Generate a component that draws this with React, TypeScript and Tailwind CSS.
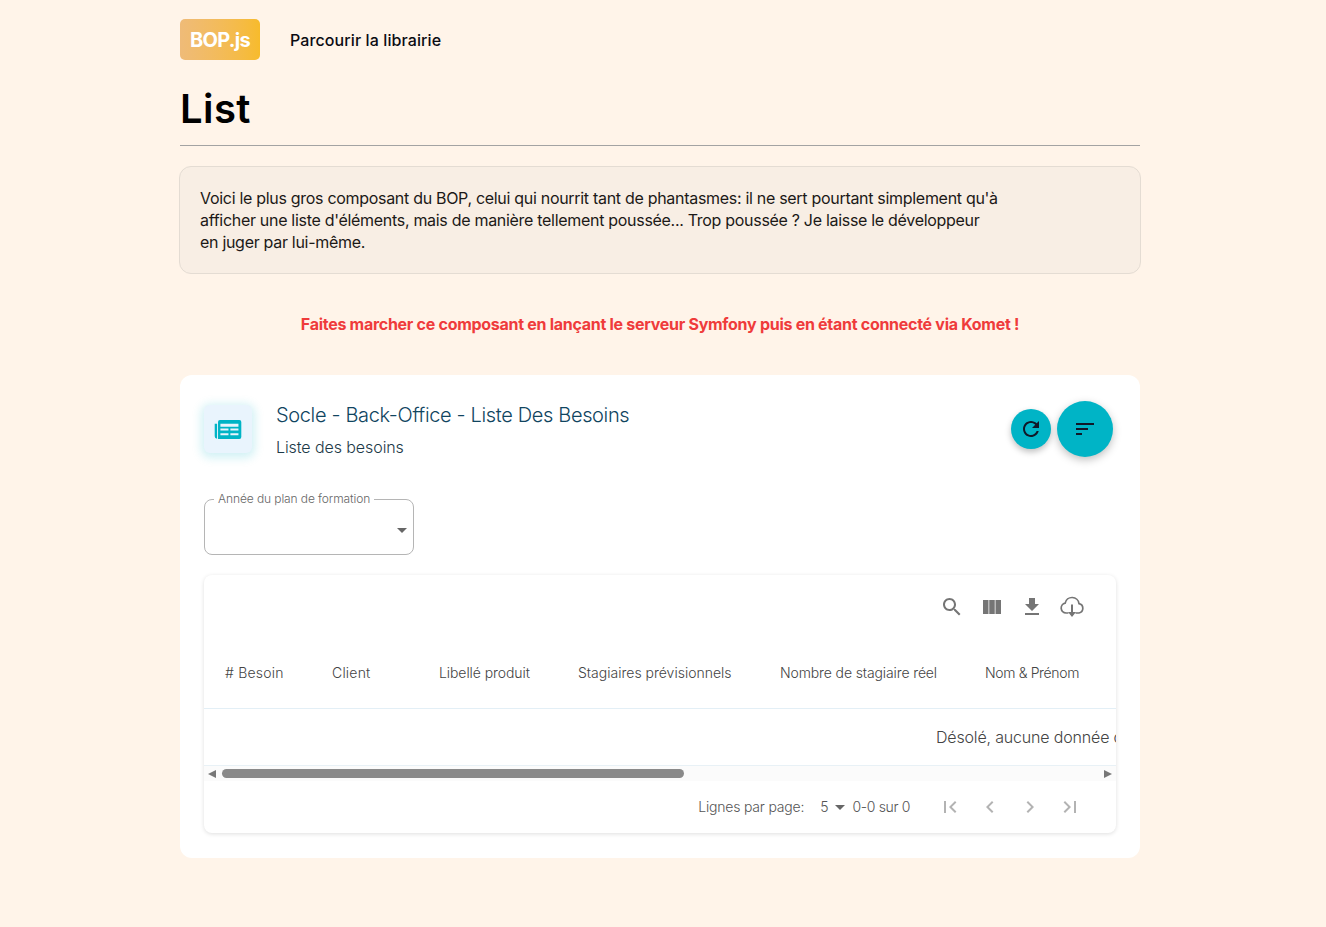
import React from 'react';

const fontStack = { fontFamily: 'Inter, "Noto Sans", sans-serif' };

function MatIcon({ d, className }: { d: string; className?: string }) {
  return (
    <svg viewBox="0 0 24 24" fill="currentColor" className={className}>
      <path d={d} />
    </svg>
  );
}

const icons = {
  search:
    'M15.5 14h-.79l-.28-.27C15.41 12.59 16 11.11 16 9.5 16 5.91 13.09 3 9.5 3S3 5.91 3 9.5 5.91 16 9.5 16c1.61 0 3.09-.59 4.23-1.57l.27.28v.79l5 4.99L20.49 19l-4.99-5zm-6 0C7.01 14 5 11.99 5 9.5S7.01 5 9.5 5 14 7.01 14 9.5 11.99 14 9.5 14z',
  columns: 'M3 5h5.500v14H3zM9.250 5h5.500v14h-5.500zM15.500 5H21v14h-5.500z',
  download: 'M19 9h-4V3H9v6H5l7 7 7-7zM5 18v2h14v-2H5z',
  refresh:
    'M17.65 6.35C16.2 4.9 14.21 4 12 4c-4.42 0-7.99 3.58-7.99 8s3.57 8 7.99 8c3.73 0 6.84-2.55 7.73-6h-2.08c-.82 2.33-3.04 4-5.65 4-3.31 0-6-2.69-6-6s2.69-6 6-6c1.66 0 3.14.69 4.22 1.78L13 11h7V4l-2.35 2.35z',
  sort: 'M3 18h6v-2H3v2zM3 6v2h18V6H3zm0 7h12v-2H3v2z',
  first: 'M18.41 16.59L13.82 12l4.59-4.59L17 6l-6 6 6 6zM6 6h2v12H6z',
  prev: 'M15.41 7.41L14 6l-6 6 6 6 1.41-1.41L10.83 12z',
  next: 'M10 6L8.59 7.41 13.17 12l-4.58 4.59L10 18l6-6z',
  last: 'M5.59 7.41L10.18 12l-4.59 4.59L7 18l6-6-6-6zM16 6h2v12h-2z',
};

const columns = [
  { label: '# Besoin', width: 'w-[107px] tracking-[0.2px]' },
  { label: 'Client', width: 'w-[107px] tracking-[0.2px]' },
  { label: 'Libellé produit', width: 'w-[139px] tracking-[-0.08px]' },
  { label: 'Stagiaires prévisionnels', width: 'w-[202px]' },
  { label: 'Nombre de stagiaire réel', width: 'w-[205px] tracking-[-0.12px]' },
  { label: 'Nom & Prénom', width: 'w-[131px] tracking-[-0.35px]' },
];

export default function App() {
  return (
    <div className="min-h-[927px] bg-[#fff4e9] pr-[6px] text-black" style={fontStack}>
      <div className="mx-auto w-[960px]">
        <nav className="flex items-center gap-[30px] pt-[19px]">
          <div className="flex h-[41px] w-20 items-center justify-center rounded-[5px] bg-gradient-to-r from-[#efbb78] to-[#f7bb2b] text-[20px] font-bold tracking-[-0.7px] text-white">
            BOP.js
          </div>
          <a className="text-[16px] font-medium tracking-[0.1px] text-[#0b0b12]">Parcourir la librairie</a>
        </nav>

        <h1 className="mt-[21px] h-[65px] border-b border-[#a3a3a3] text-[40px] leading-[56px] font-semibold tracking-[0.4px]">
          List
        </h1>

        <div className="-mx-px mt-5 rounded-xl border border-[#e4dcd3] bg-[#f8eee4] px-5 py-[20px] text-[16px] leading-[22px] tracking-[-0.3px] text-[#1c1917]">
          <p className="w-[800px]">
            Voici le plus gros composant du BOP, celui qui nourrit tant de phantasmes: il ne sert pourtant simplement
            qu'à afficher une liste d'éléments, mais de manière tellement poussée... Trop poussée ? Je laisse le
            développeur en juger par lui-même.
          </p>
        </div>

        <p className="mt-10 text-center text-[16px] leading-5 font-bold tracking-[-0.28px] text-[#ef3b3b]">
          Faites marcher ce composant en lançant le serveur Symfony puis en étant connecté via Komet !
        </p>

        <section className="mt-[41px] h-[483px] rounded-xl bg-white px-6 pt-[26px]">
          <header className="flex items-start justify-between pr-[3px]">
            <div className="flex">
              <div className="mt-1 flex h-12 w-12 items-center justify-center rounded-md bg-[#e9f4fd] shadow-[0_2px_10px_3px_rgba(0,180,200,0.18)]">
                <svg viewBox="0 0 28 20" className="h-[19px] w-7 text-[#00b4c6]" fill="currentColor">
                  <path d="M0 4h2.500v15.800A2.800 2.800 0 0 1 0 17zM3.500 2a2 2 0 0 1 2-2H26a2 2 0 0 1 2 2v16a2 2 0 0 1-2 2H3.500zM6 4v3h19V4zm0 5v2h8.500V9zm10.500 0v2H25V9zM6 14v2h8.500v-2zm10.500 0v2H25v-2z" fillRule="evenodd" />
                </svg>
              </div>
              <div className="ml-6 text-[#10455f]">
                <h2 className="text-[20px] leading-7 font-light tracking-[-0.35px]">
                  Socle - Back-Office - Liste Des Besoins
                </h2>
                <p className="mt-2 text-[16px] leading-5 font-light tracking-[-0.08px] text-[#1d3a48]">Liste des besoins</p>
              </div>
            </div>
            <div className="flex items-center gap-1.5">
              <button className="flex h-10 w-10 items-center justify-center rounded-full bg-[#00b4c6] text-[#101828] shadow-[0_3px_6px_rgba(0,0,0,0.25)]">
                <MatIcon d={icons.refresh} className="h-6 w-6" />
              </button>
              <button className="flex h-14 w-14 items-center justify-center rounded-full bg-[#00b4c6] text-[#101828] shadow-[0_3px_8px_rgba(0,0,0,0.25)]">
                <MatIcon d={icons.sort} className="h-6 w-6" />
              </button>
            </div>
          </header>

          <div className="relative mt-[42px] h-14 w-[210px] rounded-lg border border-[#b5b5b5]">
            <span className="absolute top-[-9px] left-[9px] bg-white px-1 text-[12px] leading-[15px] font-light tracking-[-0.1px] text-[#666]">
              Année du plan de formation
            </span>
            <span className="absolute top-[28px] right-[6px] h-0 w-0 border-x-[5px] border-t-[5px] border-x-transparent border-t-[#666]" />
          </div>

          <div className="mt-5 h-[258px] overflow-hidden rounded-lg bg-white shadow-[0_1px_4px_rgba(0,0,0,0.13)]">
            <div className="flex h-16 items-center justify-end gap-4 pr-[32px] text-[#757575]">
              <MatIcon d={icons.search} className="h-6 w-6" />
              <MatIcon d={icons.columns} className="h-6 w-6" />
              <MatIcon d={icons.download} className="h-6 w-6" />
              <svg viewBox="0 0 24 24" className="h-6 w-6" fill="none">
                <path
                  d="M8.500 18H6A5 5 0 0 1 5.200 8.100 A7 7 0 0 1 19 8.600 A4.800 4.800 0 0 1 19 18 H15.500"
                  stroke="currentColor"
                  strokeWidth="1.700"
                />
                <path d="M11 9.500h2V17h3l-4 5-4-5h3z" fill="currentColor" />
              </svg>
            </div>

            <div className="flex h-[70px] items-center border-b border-[#e3eff6] pb-[2px] pl-[21px] text-[14px] font-light whitespace-nowrap text-[#444]">
              {columns.map((col) => (
                <div key={col.label} className={col.width}>
                  {col.label}
                </div>
              ))}
            </div>

            <div className="flex h-[57px] items-center justify-start overflow-hidden border-b border-[#e8f1f6] pl-[732px] text-[16px] font-light tracking-[-0.17px] whitespace-nowrap text-[#444]">
              Désolé, aucune donnée disponible
            </div>

            <div className="flex h-[15px] items-center bg-[#fbfbfb] px-1">
              <span className="h-0 w-0 border-y-[4.5px] border-r-[8px] border-y-transparent border-r-[#777]" />
              <div className="ml-[6px] h-[9px] w-[462px] rounded-full bg-[#8a8a8a]" />
              <span className="ml-auto h-0 w-0 border-y-[4.5px] border-l-[8px] border-y-transparent border-l-[#777]" />
            </div>

            <div className="flex h-[52px] items-center justify-end pr-[34px] text-[14px] font-light text-[#555]">
              <div className="flex items-center pb-[2px]">
                <span className="tracking-[-0.2px]">Lignes par page:</span>
                <span className="ml-4">5</span>
                <span className="mt-[3px] ml-[7px] h-0 w-0 border-x-[5px] border-t-[5px] border-x-transparent border-t-[#666]" />
                <span className="ml-[7px] tracking-[-0.35px]">0-0 sur 0</span>
              </div>
              <div className="ml-[28px] flex gap-4 text-[#b3b3b3]">
                <MatIcon d={icons.first} className="h-6 w-6" />
                <MatIcon d={icons.prev} className="h-6 w-6" />
                <MatIcon d={icons.next} className="h-6 w-6" />
                <MatIcon d={icons.last} className="h-6 w-6" />
              </div>
            </div>
          </div>
        </section>
      </div>
    </div>
  );
}
